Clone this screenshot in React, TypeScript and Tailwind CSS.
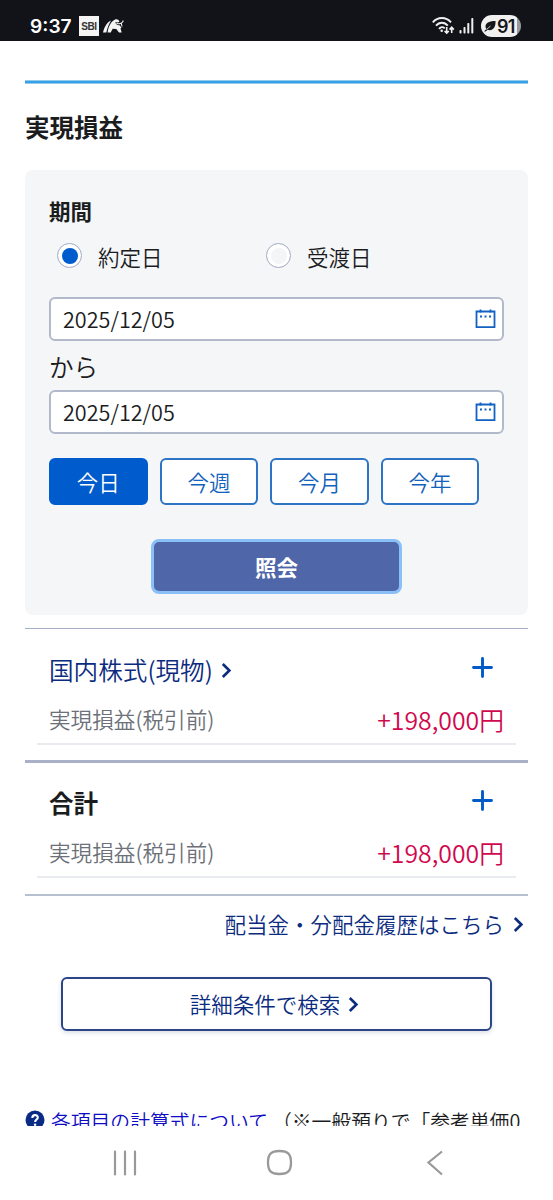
import React from "react";

function Chevron({ className = "" }: { className?: string }) {
  return (
    <svg className={`h-[17px] w-[11px] shrink-0 ${className}`} viewBox="0 0 11 17" fill="none" stroke="currentColor" strokeWidth="2.600">
      <path d="M1.800 2 L8.400 8.500 L1.800 15" />
    </svg>
  );
}

function StatusBar() {
  return (
    <header className="flex h-[41px] shrink-0 items-start bg-[#121318] pl-[30px] pr-[32px] text-white">
      <span className="mt-[14px] w-[41px] whitespace-nowrap font-[Inter] text-[19.2px] leading-[25px] font-semibold">9:37</span>
      <span className="mt-[16px] ml-[8px] flex h-[20px] w-[20px] items-center justify-center bg-[#f4f4f4] font-['Liberation_Sans'] text-[10px] font-bold tracking-[-0.4px] text-[#333]">
        SBI
      </span>
      <svg className="mt-[18px] ml-[4px] h-[16px] w-[21px]" viewBox="0 0 21 16" fill="#f4f4f4">
        <path d="M0 14.500C1 10.500 3 5 8 2.500C5.500 6.500 4.500 10 3.300 14.500Z" />
        <path d="M4.700 14.500C5 9 8 3.500 12 1.500C14 0.800 15.500 1.500 16.500 3.500C15.500 4.800 13.500 4.500 12.500 3.700C12.300 6 14 7.500 16.500 7.300L18.500 9.500L17.500 10.500L18.700 14.500H16L13.300 11L9.700 10.800L7.700 14.500Z" />
        <path d="M13.500 5.300C15.500 6.200 18.500 5.800 20 3.500V2.500M18.300 5.500L19 8.500" fill="none" stroke="#f4f4f4" strokeWidth="1.100" />
      </svg>
      <svg className="mt-[16px] ml-auto h-[19px] w-[23px]" viewBox="0 0 23 19" fill="none" stroke="#f0f0f0" strokeWidth="1.900">
        <path d="M.8 6.300C5.800.6 14 .6 19 6.300M4 9.700C7.300 5.700 12.500 5.700 15.800 9.700M7 12.800C9 10.600 11 10.600 12.700 12.300" />
        <circle cx="9.700" cy="14.700" r="1.300" fill="#f0f0f0" stroke="none" />
        <path d="M14.700 11V17M12.600 15L14.700 17.200L16.800 15M19.700 17V11.500M17.600 13.600L19.700 11.300L21.800 13.600" strokeWidth="1.600" />
      </svg>
      <svg className="mt-[17px] ml-[4px] h-[17px] w-[15px]" viewBox="0 0 15 17" fill="#f0f0f0">
        <rect x="0.500" y="13" width="2" height="3.500" rx="0.700" />
        <rect x="4.500" y="10" width="2" height="6.500" rx="0.700" />
        <rect x="8.300" y="6" width="2" height="10.500" rx="0.700" />
        <rect x="12.300" y="1" width="2" height="15.500" rx="0.700" />
      </svg>
      <span className="mt-[15px] ml-[7px] flex h-[22px] w-[40px] items-center rounded-full bg-[linear-gradient(90deg,#f1f1f1_90%,#999_90%)] pl-[3px] text-[#16171b]">
        <svg className="h-[13px] w-[12px]" viewBox="0 0 12 13" fill="currentColor">
          <path d="M11.500 1C6 1 1.500 2.500 1.500 6.500C1.500 7.500 2 8.500 2.500 9L0 11.200L1.500 11.600L3.700 9.800C8 11.500 12 8 11.500 1Z" />
          <path d="M2.500 9.500L6.500 6" stroke="#f1f1f1" strokeWidth="0.800" />
        </svg>
        <span className="ml-px pt-px font-[Inter] text-[18px] leading-[22px] font-semibold tracking-[-0.8px]">91</span>
      </span>
    </header>
  );
}

function DateField() {
  return (
    <div className="flex h-[44px] w-[455px] shrink-0 items-center justify-between rounded-[6px] border-2 border-[#b1b9ca] bg-white pr-[6px] pl-[12px]">
      <span className="text-[21.6px] leading-[40px]">2025/12/05</span>
      <svg className="h-[20px] w-[21px]" viewBox="0 0 21 20" fill="none" stroke="#1262c4" strokeWidth="1.800">
        <path d="M1.500 2.500H19.500V18.200H1.500Z" />
        <path d="M5.500 0.500V3.500M15.500 0.500V3.500" />
        <path d="M5 7.500H7M9.500 7.500H11.500M14 7.500H16" />
      </svg>
    </div>
  );
}

function Radio({ label, checked = false }: { label: string; checked?: boolean }) {
  return (
    <label className="flex w-[209px] items-center">
      <span className="mb-[3px] flex size-[25px] items-center justify-center rounded-full border-[1.5px] border-[#a1abc2] bg-white">
        <span className={`size-[16px] rounded-full ${checked ? "bg-[#005bcd]" : "bg-[#f4f5f7]"}`} />
      </span>
      <span className="ml-[16px] text-[21.5px] leading-[32px]">{label}</span>
    </label>
  );
}

function Plus() {
  return (
    <svg className="mr-[11px] mb-[3px] size-[21px]" viewBox="0 0 21 21" stroke="#005bc8" strokeWidth="2.900" strokeLinecap="round">
      <path d="M10.500 1.500V19.500M1.500 10.500H19.500" />
    </svg>
  );
}

function Amount() {
  return (
    <div className="mx-[12px] flex h-[49px] items-start justify-between border-b-2 border-[#e8ebf0] px-[12px] pt-[5px]">
      <span className="text-[21.6px] leading-[36px] text-[#6c7078]">実現損益(税引前)</span>
      <span className="text-[24.8px] leading-[36px] text-[#d0084e]">+198,000円</span>
    </div>
  );
}

const periods = ["今日", "今週", "今月", "今年"];

export default function App() {
  return (
    <div className="flex h-[1200px] w-[553px] flex-col overflow-hidden bg-white font-['Noto_Sans_CJK_JP',sans-serif] font-[350] text-[#1b1c1e]">
      <StatusBar />
      <main className="flex h-[1085px] shrink-0 flex-col overflow-hidden px-[25px] pt-[39px]">
        <div className="h-[4px] w-[503px] shrink-0 border-y border-[#92cceb] bg-[#36a1e8]" />
        <h1 className="mt-[25px] h-[37px] shrink-0 text-[24.5px] leading-[36px] font-bold">実現損益</h1>
        <section className="mt-[24px] flex h-[445px] w-[503px] shrink-0 flex-col rounded-[8px] bg-[#f4f6f8] px-[24px] pt-[25px]">
          <h2 className="h-[32px] text-[21.5px] leading-[32px] font-bold">期間</h2>
          <div className="mt-[14px] flex h-[32px] items-center pl-[8px]">
            <Radio label="約定日" checked />
            <Radio label="受渡日" />
          </div>
          <div className="mt-[24px]"><DateField /></div>
          <div className="h-[49px] text-[24.6px] leading-[50px]">から</div>
          <DateField />
          <div className="mt-[24px] flex gap-[12px]">
            {periods.map((period, i) => (
              <button
                key={period}
                className={`h-[47px] w-[98.6px] rounded-[6px] border-2 text-[21.5px] leading-[40px] ${i === 0 ? "border-[#005bcd] bg-[#005bcd] text-white" : "border-[#2e74c5] bg-white text-[#1262bd]"}`}
              >
                {period}
              </button>
            ))}
          </div>
          <button className="mt-[34px] h-[55px] w-[251px] self-center rounded-[8px] border-[3px] border-[#8bbff7] bg-[#4f66a8] text-[21.5px] leading-[44px] font-bold text-white">
            照会
          </button>
        </section>
        <section className="mt-[13px] flex h-[132px] w-[503px] shrink-0 flex-col border-t border-[#a4b1c8]">
          <div className="mt-[22px] flex h-[36px] items-center justify-between px-[24px]">
            <a className="flex items-center text-[24.6px] leading-[36px] text-[#0b2b7f]">国内株式(現物)<Chevron className="mt-[2px] ml-[8px]" /></a>
            <Plus />
          </div>
          <div className="mt-[9px]"><Amount /></div>
        </section>
        <section className="flex h-[134px] w-[503px] shrink-0 flex-col border-t-[3px] border-[#a8b1c6]">
          <div className="mt-[21px] flex h-[36px] items-center justify-between px-[24px]">
            <h2 className="text-[24.6px] leading-[36px] font-bold">合計</h2>
            <Plus />
          </div>
          <div className="mt-[9px]"><Amount /></div>
        </section>
        <section className="flex w-[503px] shrink-0 flex-col border-t-2 border-[#b7c0d0]">
          <a className="mt-[12px] mr-[4px] flex h-[32px] items-center justify-end text-[21.5px] leading-[32px] text-[#0b2b7f]">
            配当金・分配金履歴はこちら<Chevron className="ml-[9px]" />
          </a>
          <button className="mt-[37px] flex h-[54px] w-[431px] items-center justify-center self-center rounded-[6px] border-2 border-[#2c4488] bg-white pr-[4px] text-[21.5px] leading-[50px] text-[#0b2b7f] shadow-[0_2px_4px_rgba(20,40,90,0.15)]">
            詳細条件で検索<Chevron className="ml-[8px]" />
          </button>
        </section>
        <p className="mt-[78px] flex h-[30px] w-[503px] shrink-0 items-start whitespace-nowrap text-[19.8px] leading-[24px]">
          <svg className="mt-px mr-[6px] h-[20px] w-[20px] shrink-0" viewBox="0 0 19 20">
            <circle cx="9.500" cy="10" r="9.500" fill="#092b84" />
            <path d="M6.800 8C6.800 4.200 12.300 4.200 12.300 7.500C12.300 9.500 9.600 9.500 9.600 12" fill="none" stroke="white" strokeWidth="2.100" />
            <circle cx="9.600" cy="14.700" r="1.300" fill="white" />
          </svg>
          <a className="text-[#0d0bc4]">各項目の計算式について</a>
          <span className="ml-[4px]">（※一般預りで「参考単価0</span>
        </p>
      </main>
      <nav className="flex h-[74px] shrink-0 items-start bg-white pt-[23px] pl-[113px] text-[#999]">
        <svg className="mt-px h-[26px] w-[24px]" viewBox="0 0 24 26" fill="none" stroke="currentColor" strokeWidth="2.200">
          <path d="M2 1.500V24.500M12 1.500V24.500M22 1.500V24.500" strokeLinecap="round" />
        </svg>
        <svg className="ml-[129px] h-[27px] w-[27px]" viewBox="0 0 27 27" fill="none" stroke="currentColor" strokeWidth="2.300">
          <path d="M13.500 2C22 2 25 5 25 13.500S22 25 13.500 25S2 22 2 13.500S5 2 13.500 2Z" />
        </svg>
        <svg className="ml-[133px] mt-px h-[26px] w-[18px]" viewBox="0 0 18 26" fill="none" stroke="currentColor" strokeWidth="2.200">
          <path d="M16 1.500L2.500 12.500L16 24.500" />
        </svg>
      </nav>
    </div>
  );
}
